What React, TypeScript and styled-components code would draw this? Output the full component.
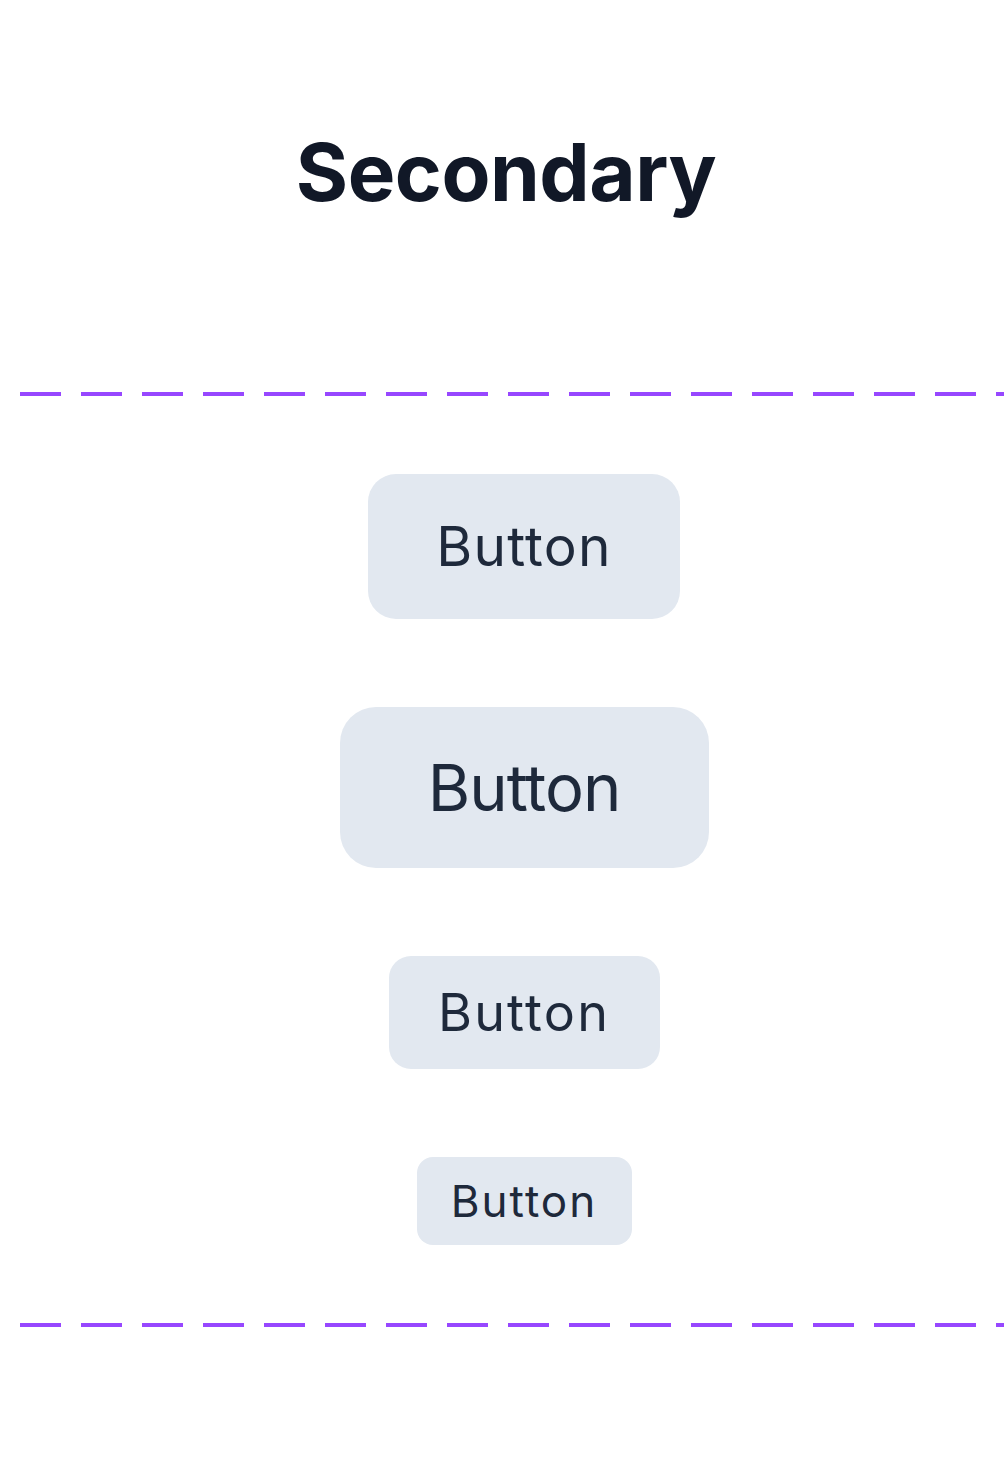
import React from "react";
import styled, { createGlobalStyle } from "styled-components";

const Global = createGlobalStyle`
  html, body { margin: 0; padding: 0; background: #ffffff; }
  body { font-family: Inter, "Liberation Sans", Arial, sans-serif; }
`;

const Page = styled.div`
  width: 1004px;
  overflow: hidden;
`;

const Header = styled.header`
  box-sizing: border-box;
  height: 392px;
  padding-top: 132px;
  padding-left: 8px;
  display: flex;
  justify-content: center;
`;

const Title = styled.h1`
  margin: 0;
  font-family: Inter, "Liberation Sans", Arial, sans-serif;
  font-size: 80px;
  line-height: 80px;
  font-weight: 700;
  color: #111827;
  letter-spacing: -0.5px;
`;

const DashedRule = styled.div`
  margin-left: 20px;
  width: 1008px;
  height: 4px;
  background: repeating-linear-gradient(
    to right,
    #9747ff 0,
    #9747ff 40.5px,
    transparent 40.5px,
    transparent 61px
  );
`;

const Stack = styled.section`
  box-sizing: border-box;
  margin-left: 20px;
  width: 1008px;
  padding: 78px 0 78px;
  display: flex;
  flex-direction: column;
  align-items: center;
  gap: 88px;
`;

type Size = "md" | "lg" | "sm" | "xs";

const sizes: Record<Size, { w: number; h: number; fs: number; r: number; ls: number }> = {
  md: { w: 312, h: 145, fs: 55, r: 28, ls: 1.2 },
  lg: { w: 369, h: 161, fs: 65, r: 36, ls: -1 },
  sm: { w: 271, h: 113, fs: 52, r: 22, ls: 2.2 },
  xs: { w: 215, h: 88, fs: 44, r: 16, ls: 2 },
};

const SecondaryButton = styled.button<{ $size: Size }>`
  box-sizing: border-box;
  width: ${(p) => sizes[p.$size].w}px;
  height: ${(p) => sizes[p.$size].h}px;
  border-radius: ${(p) => sizes[p.$size].r}px;
  border: none;
  padding: 0;
  background: #e2e8f0;
  color: #1e293b;
  font-family: Inter, "Liberation Sans", Arial, sans-serif;
  font-size: ${(p) => sizes[p.$size].fs}px;
  letter-spacing: ${(p) => sizes[p.$size].ls}px;
  font-weight: 400;
  line-height: 1;
  display: flex;
  align-items: center;
  justify-content: center;
  cursor: pointer;
`;

export default function App() {
  return (
    <Page>
      <Global />
      <Header>
        <Title>Secondary</Title>
      </Header>
      <DashedRule />
      <Stack>
        <SecondaryButton $size="md">Button</SecondaryButton>
        <SecondaryButton $size="lg">Button</SecondaryButton>
        <SecondaryButton $size="sm">Button</SecondaryButton>
        <SecondaryButton $size="xs">Button</SecondaryButton>
      </Stack>
      <DashedRule />
    </Page>
  );
}
